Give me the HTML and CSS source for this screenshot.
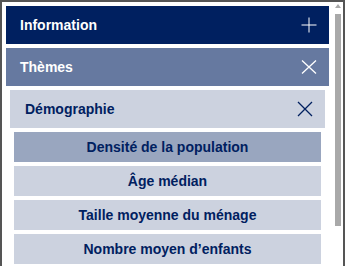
FILE: index.html
```html
<!DOCTYPE html>
<html>
<head>
  <title>Thèmes</title>
  <link rel="stylesheet" href="styles.css">
</head>
<body>
  <div class="panel">
    <div class="content">
      <div class="section-head main">
        <span>Information</span>
        <svg class="icon" width="16" height="16" viewBox="0 0 16 16"><path d="M0.5 8H15.5M8 0.5V15.5" stroke="#fff" stroke-width="1" fill="none"/></svg>
      </div>
      <div class="section-head open">
        <span>Thèmes</span>
        <svg class="icon" width="16" height="16" viewBox="0 0 16 16"><path d="M1 1.5L15 14.5M15 1.5L1 14.5" stroke="#fff" stroke-width="1.3" fill="none"/></svg>
      </div>
      <div class="section-head sub">
        <span>Démographie</span>
        <svg class="icon" width="16" height="16" viewBox="0 0 16 16"><path d="M1 1L15 15M15 1L1 15" stroke="#002060" stroke-width="1.3" fill="none"/></svg>
      </div>
      <div class="items">
        <div class="item selected">Densité de la population</div>
        <div class="item">Âge médian</div>
        <div class="item">Taille moyenne du ménage</div>
        <div class="item">Nombre moyen d’enfants</div>
      </div>
    </div>
    <div class="scrollbar">
      <div class="scroll-up"></div>
      <div class="scroll-thumb"></div>
    </div>
  </div>
</body>
</html>
```

FILE: styles.css
```css
body {
  margin: 0;
  padding: 0;
  overflow: hidden;
  background-color: #fff;
  font-family: "Liberation Sans", Arial, sans-serif;
}

.panel {
  box-sizing: border-box;
  width: 345px;
  height: 300px;
  border: 2px solid #555;
  display: flex;
}

.content {
  flex: 1;
  min-width: 0;
  overflow: hidden;
  padding: 4px 2px 4px 4px;
  display: flex;
  flex-direction: column;
  gap: 4px;
}

.scrollbar {
  flex: none;
  width: 12px;
  background-color: #fff;
}

.scroll-up {
  width: 0;
  height: 0;
  margin: 2px 0 0 4px;
  border-left: 3px solid transparent;
  border-right: 3px solid transparent;
  border-bottom: 4px solid #a9a9a9;
}

.scroll-thumb {
  width: 6px;
  height: 212px;
  margin: 6px 0 0 4px;
  background-color: #a9a9a9;
}

.section-head {
  flex: none;
  height: 38px;
  display: flex;
  align-items: center;
  justify-content: space-between;
  padding: 0 12px 0 14px;
  font-size: 14px;
  font-weight: bold;
}

.section-head .icon {
  display: block;
}

.main {
  background-color: #002060;
  color: #fff;
}

.open {
  background-color: #6679a0;
  color: #fff;
}

.sub {
  margin: 0 4px;
  padding-left: 15px;
  background-color: #ccd2df;
  color: #002060;
}

.items {
  display: flex;
  flex-direction: column;
  gap: 4px;
  margin: 0 8px;
}

.item {
  flex: none;
  height: 30px;
  display: flex;
  align-items: center;
  justify-content: center;
  font-size: 14px;
  font-weight: bold;
  color: #002060;
  background-color: #ccd2df;
}

.item.selected {
  background-color: #99a6bf;
}
```
